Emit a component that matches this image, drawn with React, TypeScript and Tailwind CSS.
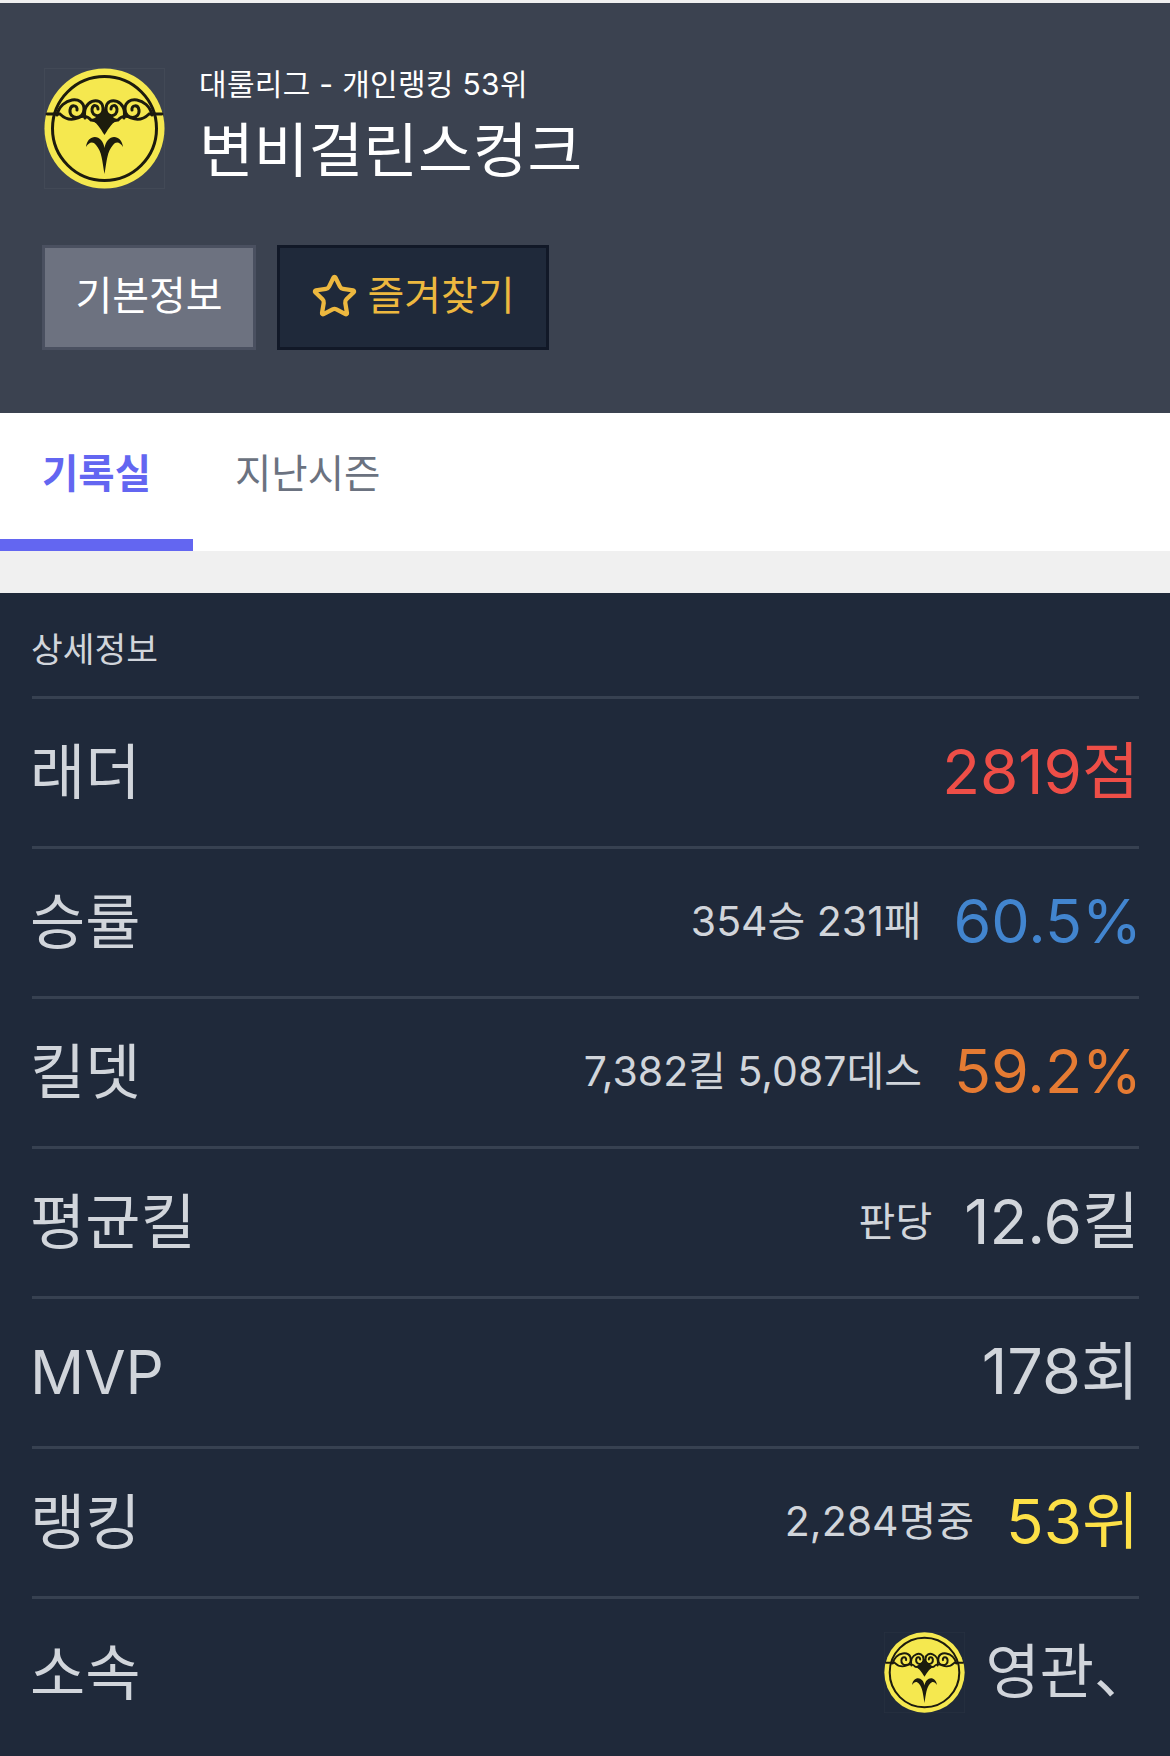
import { Star } from "lucide-react";

const FONT = "font-['Inter','Noto_Sans_CJK_KR',sans-serif]";

function Emblem({ size }: { size: number }) {
  return (
    <svg width={size} height={size} viewBox="0 0 121 121" className="shrink-0">
      <defs>
        <filter id="soft" x="-5%" y="-5%" width="110%" height="110%">
          <feGaussianBlur stdDeviation="0.55" />
        </filter>
      </defs>
      <rect x="0.5" y="0.5" width="120" height="120" fill="none" stroke="#ffffff" strokeOpacity="0.04" />
      <g filter="url(#soft)">
        <circle cx="60.5" cy="60.5" r="60" fill="#f5e84f" />
        <circle cx="60.5" cy="60.5" r="52" fill="none" stroke="#1c1a10" strokeWidth="3" />
        <g fill="none" stroke="#1c1a10" strokeLinecap="round">
          <path d="M3 46 L16 46 Q24 54 34 50 Q42 46 47 52 Q54 52 60.5 60 Q67 52 74 52 Q79 46 87 50 Q97 54 105 46 L118 46" strokeWidth="2.8" />
          <path d="M13 47 C17 29 40 27 40 41 C40 52 25 52 26 42 C27 36 34 37 33 42" strokeWidth="3" />
          <path d="M108 47 C104 29 81 27 81 41 C81 52 96 52 95 42 C94 36 87 37 88 42" strokeWidth="3" />
          <path d="M41 50 C37 32 58 27 59 40 C60 50 47 50 48 41 C49 36 54 37 54 41" strokeWidth="3" />
          <path d="M80 50 C84 32 63 27 62 40 C61 50 74 50 73 41 C72 36 67 37 67 41" strokeWidth="3" />
        </g>
        <path d="M46 52 C52 53 56 60 60.5 67 C65 60 69 53 75 52 C69 50 64 46 60.5 40 C57 46 52 50 46 52 Z" fill="#1c1a10" />
        <path d="M60.5 106 C58 92 58 84 52 77 C49 73 45 74 42 79 C43 69 52 66 57 72 C59 74 60 77 60.5 80 C61 77 62 74 64 72 C69 66 78 69 79 79 C76 74 72 73 69 77 C63 84 63 92 60.5 106 Z" fill="#1c1a10" />
      </g>
    </svg>
  );
}

function Row({ label, children }: { label: string; children: React.ReactNode }) {
  return (
    <div className="flex h-[150px] items-center justify-between border-b-[3px] border-[#374151] pb-[2px]">
      <span className="-ml-[2px] text-[60px] font-normal leading-none text-[#d1d5db]">{label}</span>
      <div className="flex items-center text-[#d1d5db]">{children}</div>
    </div>
  );
}

export default function App() {
  return (
    <div className={`${FONT} min-h-[1756px] overflow-hidden bg-[#1f293a]`}>
      <div className="h-[3px] bg-[#f0f0f0]" />
      <header className="h-[410px] bg-[#3b4250] px-[42px] pt-[65px]">
        <div className="flex h-[121px] items-center pl-[2px]">
          <Emblem size={121} />
          <div className="ml-[34px] pb-[9px] text-white">
            <div className="text-[30px] font-normal leading-[40px] tracking-[0.3px]">대룰리그 - 개인랭킹 53위</div>
            <div className="mt-[11px] text-[59.5px] font-normal leading-[70px]">변비걸린스컹크</div>
          </div>
        </div>
        <div className="mt-[56px] flex gap-[21px]">
          <button className="flex h-[105px] w-[214px] items-center justify-center border-[3px] border-[#4a5060] bg-[#6d7280] pb-[3px] text-[40px] font-normal text-white">
            기본정보
          </button>
          <button className="flex h-[105px] w-[272px] items-center justify-center gap-[9px] border-[3px] border-[#111827] bg-[#1f293a] pb-[3px] text-[40px] font-normal text-[#edb83f]">
            <Star size={47} strokeWidth={2.2} />
            즐겨찾기
          </button>
        </div>
      </header>

      <nav className="flex h-[138px] bg-white">
        <div className="flex w-[193px] items-center justify-center border-b-[12px] border-[#6366f1] pb-[3px] text-[39.5px] font-bold text-[#6366f1]">
          기록실
        </div>
        <div className="ml-[42px] flex items-center pb-[15px] text-[39.5px] font-normal text-[#6b7280]">지난시즌</div>
      </nav>
      <div className="h-[42px] bg-[#f0f0f0]" />

      <section className="pl-[32px] pr-[31px] pt-[30px]">
        <div className="flex h-[76px] items-start border-b-[3px] border-[#374151] pt-[5px] text-[34.5px] font-normal leading-[44px] text-[#d1d5db]">
          <span className="-ml-[1px]">상세정보</span>
        </div>
        <Row label="래더">
          <span className="text-[62px] font-normal text-[#ee4e47]">2819점</span>
        </Row>
        <Row label="승률">
          <span className="mr-[32px] text-[41px] font-normal">354승 231패</span>
          <span className="-mr-[3px] text-[61px] font-normal text-[#4285cf]">60.5%</span>
        </Row>
        <Row label="킬뎃">
          <span className="mr-[32px] text-[41px] font-normal">7,382킬 5,087데스</span>
          <span className="-mr-[3px] text-[61px] font-normal text-[#e57b33]">59.2%</span>
        </Row>
        <Row label="평균킬">
          <span className="mr-[32px] text-[40px] font-normal">판당</span>
          <span className="text-[62px] font-normal">12.6킬</span>
        </Row>
        <Row label="MVP">
          <span className="text-[63px] font-normal">178회</span>
        </Row>
        <Row label="랭킹">
          <span className="mr-[32px] text-[41px] font-normal">2,284명중</span>
          <span className="text-[62px] font-normal text-[#fde047]">53위</span>
        </Row>
        <div className="flex h-[150px] items-center justify-between pb-[3px]">
          <span className="-ml-[2px] text-[60px] font-normal leading-none text-[#d1d5db]">소속</span>
          <div className="-mr-[14px] flex items-center text-[#d1d5db]">
            <Emblem size={81} />
            <span className="ml-[20px] text-[59px] font-normal">영관、</span>
          </div>
        </div>
      </section>
    </div>
  );
}
